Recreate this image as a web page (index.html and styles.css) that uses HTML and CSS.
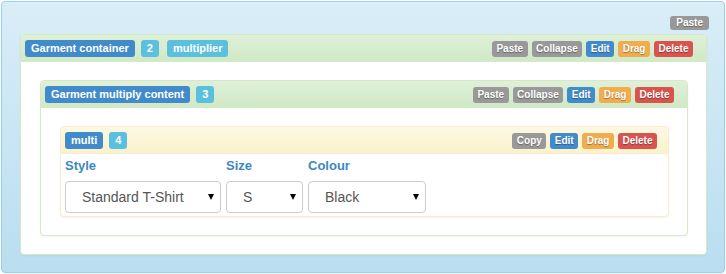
FILE: index.html
```html
<!DOCTYPE html>
<html lang="en">
<head>
    <meta charset="UTF-8">
    <title>Garment builder</title>
    <link rel="stylesheet" href="styles.css">
</head>
<body>
    <div class="well">
        <div class="toolbar">
            <span class="btn btn-default btn-top">Paste</span>
        </div>

        <!-- Garment container -->
        <div class="panel panel-success">
            <div class="panel-heading">
                <div class="tags">
                    <span class="tag tag-primary">Garment container</span>
                    <span class="tag tag-info">2</span>
                    <span class="tag tag-info tag-wide">multiplier</span>
                </div>
                <div class="actions">
                    <span class="btn btn-default">Paste</span>
                    <span class="btn btn-default">Collapse</span>
                    <span class="btn btn-primary">Edit</span>
                    <span class="btn btn-warning">Drag</span>
                    <span class="btn btn-danger">Delete</span>
                </div>
            </div>
            <div class="panel-body">

                <!-- Garment multiply content -->
                <div class="panel panel-success">
                    <div class="panel-heading">
                        <div class="tags">
                            <span class="tag tag-primary">Garment multiply content</span>
                            <span class="tag tag-info">3</span>
                        </div>
                        <div class="actions">
                            <span class="btn btn-default">Paste</span>
                            <span class="btn btn-default">Collapse</span>
                            <span class="btn btn-primary">Edit</span>
                            <span class="btn btn-warning">Drag</span>
                            <span class="btn btn-danger">Delete</span>
                        </div>
                    </div>
                    <div class="panel-body">

                        <!-- multi -->
                        <div class="panel panel-warning">
                            <div class="panel-heading heading-tight">
                                <div class="tags">
                                    <span class="tag tag-primary">multi</span>
                                    <span class="tag tag-info">4</span>
                                </div>
                                <div class="actions">
                                    <span class="btn btn-default">Copy</span>
                                    <span class="btn btn-primary">Edit</span>
                                    <span class="btn btn-warning">Drag</span>
                                    <span class="btn btn-danger">Delete</span>
                                </div>
                            </div>
                            <div class="panel-body form-body">
                                <div class="field field-style">
                                    <label for="style">Style</label>
                                    <div class="select-wrap">
                                        <select id="style">
                                            <option>Standard T-Shirt</option>
                                        </select>
                                    </div>
                                </div>
                                <div class="field field-size">
                                    <label for="size">Size</label>
                                    <div class="select-wrap">
                                        <select id="size">
                                            <option>S</option>
                                        </select>
                                    </div>
                                </div>
                                <div class="field field-colour">
                                    <label for="colour">Colour</label>
                                    <div class="select-wrap">
                                        <select id="colour">
                                            <option>Black</option>
                                        </select>
                                    </div>
                                </div>
                            </div>
                        </div>

                    </div>
                </div>

            </div>
        </div>
    </div>
</body>
</html>
```

FILE: styles.css
```css
body {
    margin: 0;
    font-family: "Liberation Sans", Arial, sans-serif;
    font-size: 14px;
    color: #333;
    background: #fff;
}

.well {
    margin: 1px;
    padding: 14px 17px 17px 18px;
    border: 1px solid #9acfea;
    border-radius: 4px;
    background: linear-gradient(to bottom, #d9edf7 0%, #b9def0 100%);
    box-shadow: inset 0 1px 0 rgba(255, 255, 255, 0.25), 0 1px 2px rgba(0, 0, 0, 0.05);
}

.toolbar {
    display: flex;
    justify-content: flex-end;
    margin-right: -2px;
    margin-bottom: 4px;
}

/* Panels */
.panel {
    background: #fff;
    border: 1px solid #d6e9c6;
    border-radius: 4px;
    box-shadow: 0 1px 2px rgba(0, 0, 0, 0.05);
}

.panel-heading {
    display: flex;
    align-items: center;
    justify-content: space-between;
    padding: 5px 13px 4px 4px;
    border-bottom: 1px solid #d6e9c6;
    border-radius: 3px 3px 0 0;
}

.panel-success .panel-heading {
    background: linear-gradient(to bottom, #dff0d8 0%, #d0e9c6 100%);
}

.panel-warning {
    border-color: #faebcc;
}

.panel-warning .panel-heading {
    background: linear-gradient(to bottom, #fcf8e3 0%, #faf2cc 100%);
    border-bottom-color: #faebcc;
}

.heading-tight {
    padding-right: 11px;
}

.panel-body {
    padding: 18px 18px 18px 19px;
}

/* Tags on the left of a heading */
.tags {
    display: flex;
    gap: 6px;
}

.tag {
    display: inline-block;
    padding: 3px 6px;
    font-size: 11px;
    font-weight: bold;
    line-height: 1;
    color: #fff;
    border-radius: 3px;
    white-space: nowrap;
}

.tag-primary { background-color: #428bca; }
.tag-info { background-color: #5bc0de; }
.tag-wide { margin-left: 2px; }

/* Small action buttons */
.actions {
    display: flex;
    gap: 4px;
}

.btn {
    display: inline-block;
    padding: 3px 4.5px;
    font-size: 10px;
    font-weight: bold;
    line-height: 1;
    color: #fff;
    border-radius: 3px;
    text-shadow: 0 1px 1px rgba(0, 0, 0, 0.35);
    cursor: pointer;
    white-space: nowrap;
}

.btn-top {
    padding: 2px 6px;
}

.btn-default { background-color: #999; }
.btn-primary { background-color: #428bca; }
.btn-warning { background-color: #f0ad4e; }
.btn-danger { background-color: #d9534f; }

/* Form inside the multi panel */
.form-body {
    display: flex;
    gap: 5px;
    padding: 2px 4px 3px 4px;
}

.field label {
    display: block;
    margin-bottom: 5px;
    font-size: 13px;
    font-weight: bold;
    line-height: 20px;
    color: #3d88bf;
}

.field-style { width: 156px; }
.field-size { width: 77px; }
.field-colour { width: 118px; }

.select-wrap {
    position: relative;
}

.select-wrap::after {
    content: "";
    position: absolute;
    top: 13px;
    right: 7px;
    border-left: 3px solid transparent;
    border-right: 3px solid transparent;
    border-top: 6px solid #000;
    pointer-events: none;
}

.select-wrap select {
    display: block;
    width: 100%;
    height: 32px;
    margin: 0;
    padding: 0 20px 0 16px;
    font-family: "Liberation Sans", Arial, sans-serif;
    font-size: 14px;
    color: #555;
    background: #fff;
    border: 1px solid #ccc;
    border-radius: 4px;
    appearance: none;
    -webkit-appearance: none;
}
```
